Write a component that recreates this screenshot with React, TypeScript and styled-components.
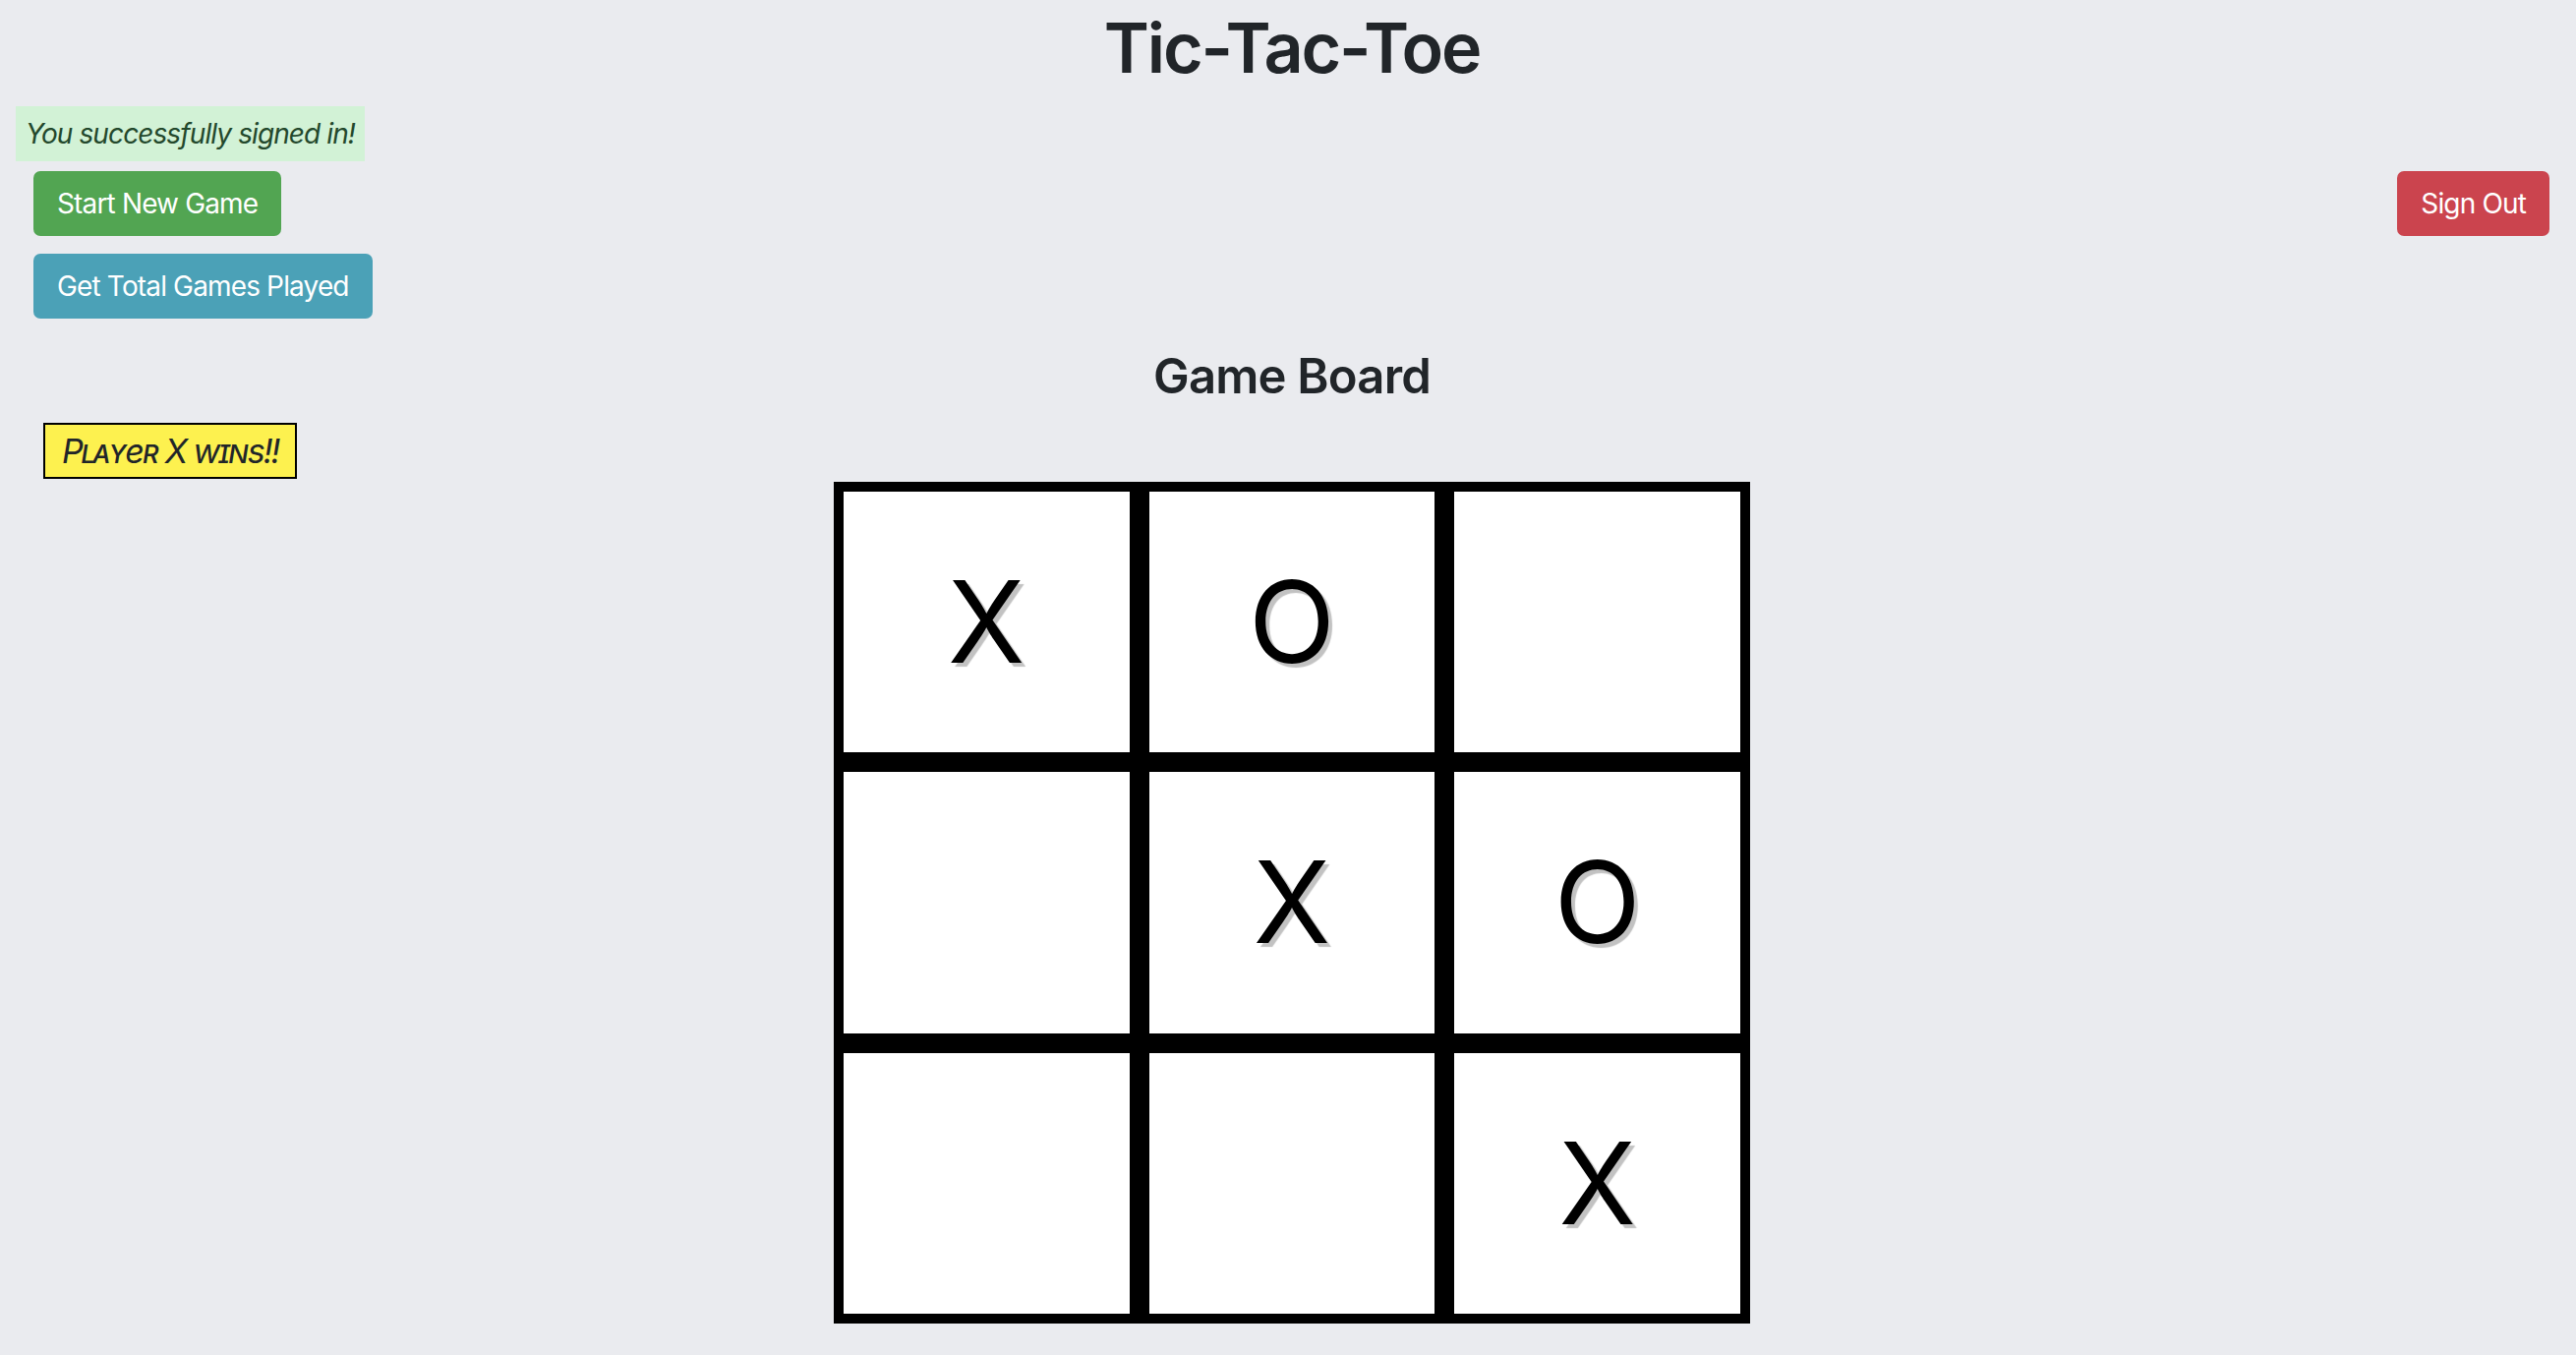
import React from "react";
import styled, { createGlobalStyle, css } from "styled-components";

const GlobalStyle = createGlobalStyle`
  html, body {
    margin: 0;
    padding: 0;
    background: #eaebef;
  }
  body {
    font-family: Inter, "Noto Sans", "Liberation Sans", sans-serif;
    color: #212529;
  }
  * { box-sizing: border-box; }
`;

const Page = styled.div`
  min-height: 1378px;
  padding-left: 8px;
  display: flex;
  flex-direction: column;
`;

const Title = styled.h1`
  margin: 0;
  padding-top: 7px;
  font-size: 70px;
  line-height: 84px;
  font-weight: 600;
  text-align: center;
  letter-spacing: -2.2px;
`;

const Notice = styled.div`
  align-self: flex-start;
  margin: 17px 0 0 8px;
  padding: 7px 10px;
  background: #d2f2d6;
  color: #23482c;
  font-size: 28px;
  line-height: 42px;
  font-style: italic;
  letter-spacing: -0.9px;
`;

const ActionBar = styled.div`
  margin-top: 10px;
  padding: 0 27px 0 26px;
  display: flex;
  justify-content: space-between;
  align-items: flex-start;
`;

const ButtonStack = styled.div`
  display: flex;
  flex-direction: column;
  align-items: flex-start;
  gap: 18px;
`;

const variants = {
  success: css`background: #52a552;`,
  info: css`background: #4ba1b7;`,
  danger: css`background: #cb444e;`,
};

const Button = styled.button<{ $variant: keyof typeof variants }>`
  border: none;
  border-radius: 7px;
  padding: 12px 24px;
  font-family: inherit;
  font-size: 28px;
  line-height: 42px;
  color: #ffffff;
  letter-spacing: -0.85px;
  cursor: pointer;
  ${(p) => variants[p.$variant]}
`;

const SectionTitle = styled.h3`
  margin: 29px 0 0;
  font-size: 49px;
  line-height: 59px;
  font-weight: 600;
  text-align: center;
  letter-spacing: -0.8px;
`;

const Status = styled.div`
  align-self: flex-start;
  margin: 18px 0 0 36px;
  padding: 0 17px;
  border: 2px solid #000;
  background: #fdf14f;
  font-size: 34px;
  line-height: 53px;
  font-style: italic;
  font-variant: small-caps;
  letter-spacing: -1.95px;
`;

const Board = styled.div`
  margin: 3px auto 0;
  width: 932px;
  height: 856px;
  display: grid;
  grid-template-columns: repeat(3, 1fr);
  grid-template-rows: repeat(3, 1fr);
  background: #000;
`;

const Cell = styled.div`
  border: 10px solid #000;
  background: #ffffff;
  display: flex;
  align-items: center;
  justify-content: center;
  font-size: 115px;
  font-weight: 400;
  color: #000;
  text-shadow: 4px 4px 1px #c2c2c2;
`;

const cells = ["X", "O", "", "", "X", "O", "", "", "X"];

export default function App() {
  return (
    <>
      <GlobalStyle />
      <Page>
        <Title>Tic-Tac-Toe</Title>
        <Notice>You successfully signed in!</Notice>
        <ActionBar>
          <ButtonStack>
            <Button $variant="success">Start New Game</Button>
            <Button $variant="info">Get Total Games Played</Button>
          </ButtonStack>
          <Button $variant="danger">Sign Out</Button>
        </ActionBar>
        <SectionTitle>Game Board</SectionTitle>
        <Status>Player X wins!!</Status>
        <Board>
          {cells.map((c, i) => (
            <Cell key={i}>{c}</Cell>
          ))}
        </Board>
      </Page>
    </>
  );
}
